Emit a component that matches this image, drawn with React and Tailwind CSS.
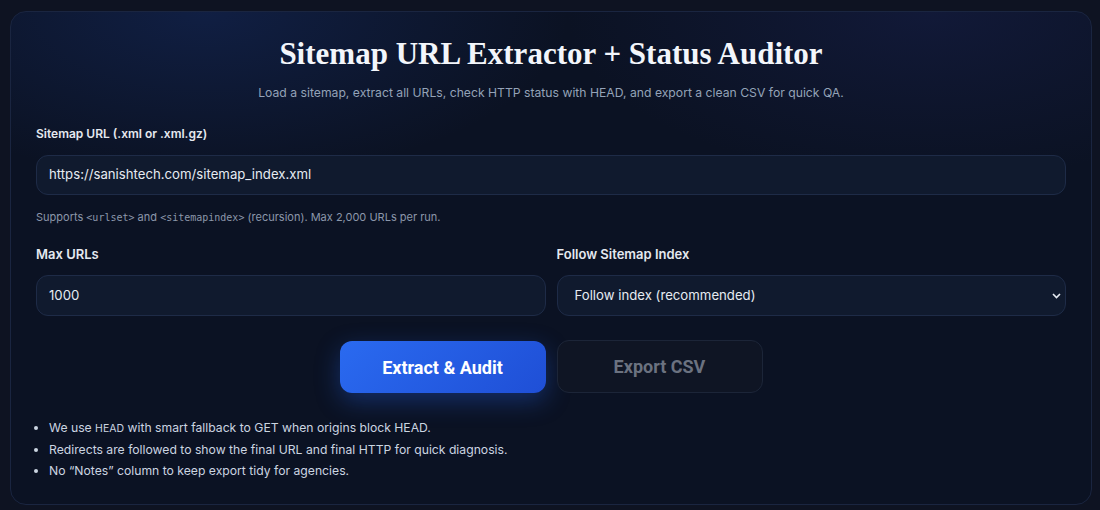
import React from "react";

export default function App() {
  const sans = "font-['Inter','Noto_Sans',sans-serif]";
  return (
    <div className={`min-h-[510px] w-[1100px] bg-[#0e1322] pt-[11px] pl-[10px] ${sans}`}>
      <div className="w-[1082px] h-[494px] rounded-[16px] border border-[#1a2540] bg-[#0b1223] bg-[radial-gradient(520px_240px_at_18%_0%,rgba(30,64,150,0.28),transparent_70%),radial-gradient(520px_240px_at_85%_0%,rgba(40,50,130,0.22),transparent_70%)] px-[25px] pt-[23px]">
        <h1 className="text-center font-['Liberation_Serif',serif] font-bold text-[31px] leading-[37px] text-[#f3f6fb]">
          Sitemap URL Extractor + Status Auditor
        </h1>
        <p className="mt-[11px] text-center text-[12.2px] leading-[20px] text-[#94a3b8]">
          Load a sitemap, extract all URLs, check HTTP status with HEAD, and export a clean CSV for quick QA.
        </p>

        <label className="mt-[21px] block text-[12px] leading-[20px] font-semibold text-[#e5e9f0]">
          Sitemap URL (.xml or .xml.gz)
        </label>
        <div className="mt-[11px] h-[40px] rounded-[12px] border border-[#1e2b47] bg-[#101a2e] px-[12px] flex items-center text-[13.2px] text-[#e6ebf2]">
          https://sanishtech.com/sitemap_index.xml
        </div>
        <p className="mt-[14px] text-[11px] leading-[16px] text-[#8b97aa]">
          Supports <code className="font-['DejaVu_Sans_Mono',monospace] text-[10px]">&lt;urlset&gt;</code> and{" "}
          <code className="font-['DejaVu_Sans_Mono',monospace] text-[10px]">&lt;sitemapindex&gt;</code> (recursion). Max 2,000 URLs per run.
        </p>

        <div className="mt-[18px] grid grid-cols-2 gap-[11px]">
          <div>
            <label className="block text-[13px] leading-[20px] font-semibold text-[#e5e9f0]">Max URLs</label>
            <div className="mt-[11px] h-[41px] rounded-[12px] border border-[#1e2b47] bg-[#101a2e] px-[12px] flex items-center text-[13.2px] text-[#e6ebf2]">
              1000
            </div>
          </div>
          <div>
            <label className="block text-[13px] leading-[20px] font-semibold text-[#e5e9f0]">Follow Sitemap Index</label>
            <div className="relative mt-[11px] h-[41px] rounded-[12px] border border-[#1e2b47] bg-[#101a2e] pl-[17px] flex items-center text-[13.2px] text-[#e6ebf2]">
              Follow index (recommended)
              <svg className="absolute right-[4px] top-[17px]" width="9" height="6" viewBox="0 0 9 6" fill="none">
                <path d="M1 1l3.5 3.5L8 1" stroke="#e6ebf2" strokeWidth="1.6" />
              </svg>
            </div>
          </div>
        </div>

        <div className="mt-[24px] flex justify-center gap-[11px]">
          <button className="h-[52px] w-[206px] mt-[1px] rounded-[12px] bg-[linear-gradient(135deg,#2a6af0,#1f4fd6)] shadow-[0_8px_24px_rgba(37,99,235,0.35)] font-['Roboto',sans-serif] font-bold text-[18px] text-white">
            Extract &amp; Audit
          </button>
          <button className="h-[53px] w-[206px] rounded-[12px] border border-[#1c2538] bg-[#0f1524] font-['Roboto',sans-serif] font-bold text-[18px] text-[#6b7280]">
            Export CSV
          </button>
        </div>

        <ul className="mt-[25px] list-disc pl-[13px] text-[12.2px] leading-[20.8px] text-[#cbd5e1] marker:text-[#cbd5e1]">
          <li>
            We use <span className="text-[10.5px]">HEAD</span> with smart fallback to GET when origins block HEAD.
          </li>
          <li>Redirects are followed to show the final URL and final HTTP for quick diagnosis.</li>
          <li>No “Notes” column to keep export tidy for agencies.</li>
        </ul>
      </div>
    </div>
  );
}
